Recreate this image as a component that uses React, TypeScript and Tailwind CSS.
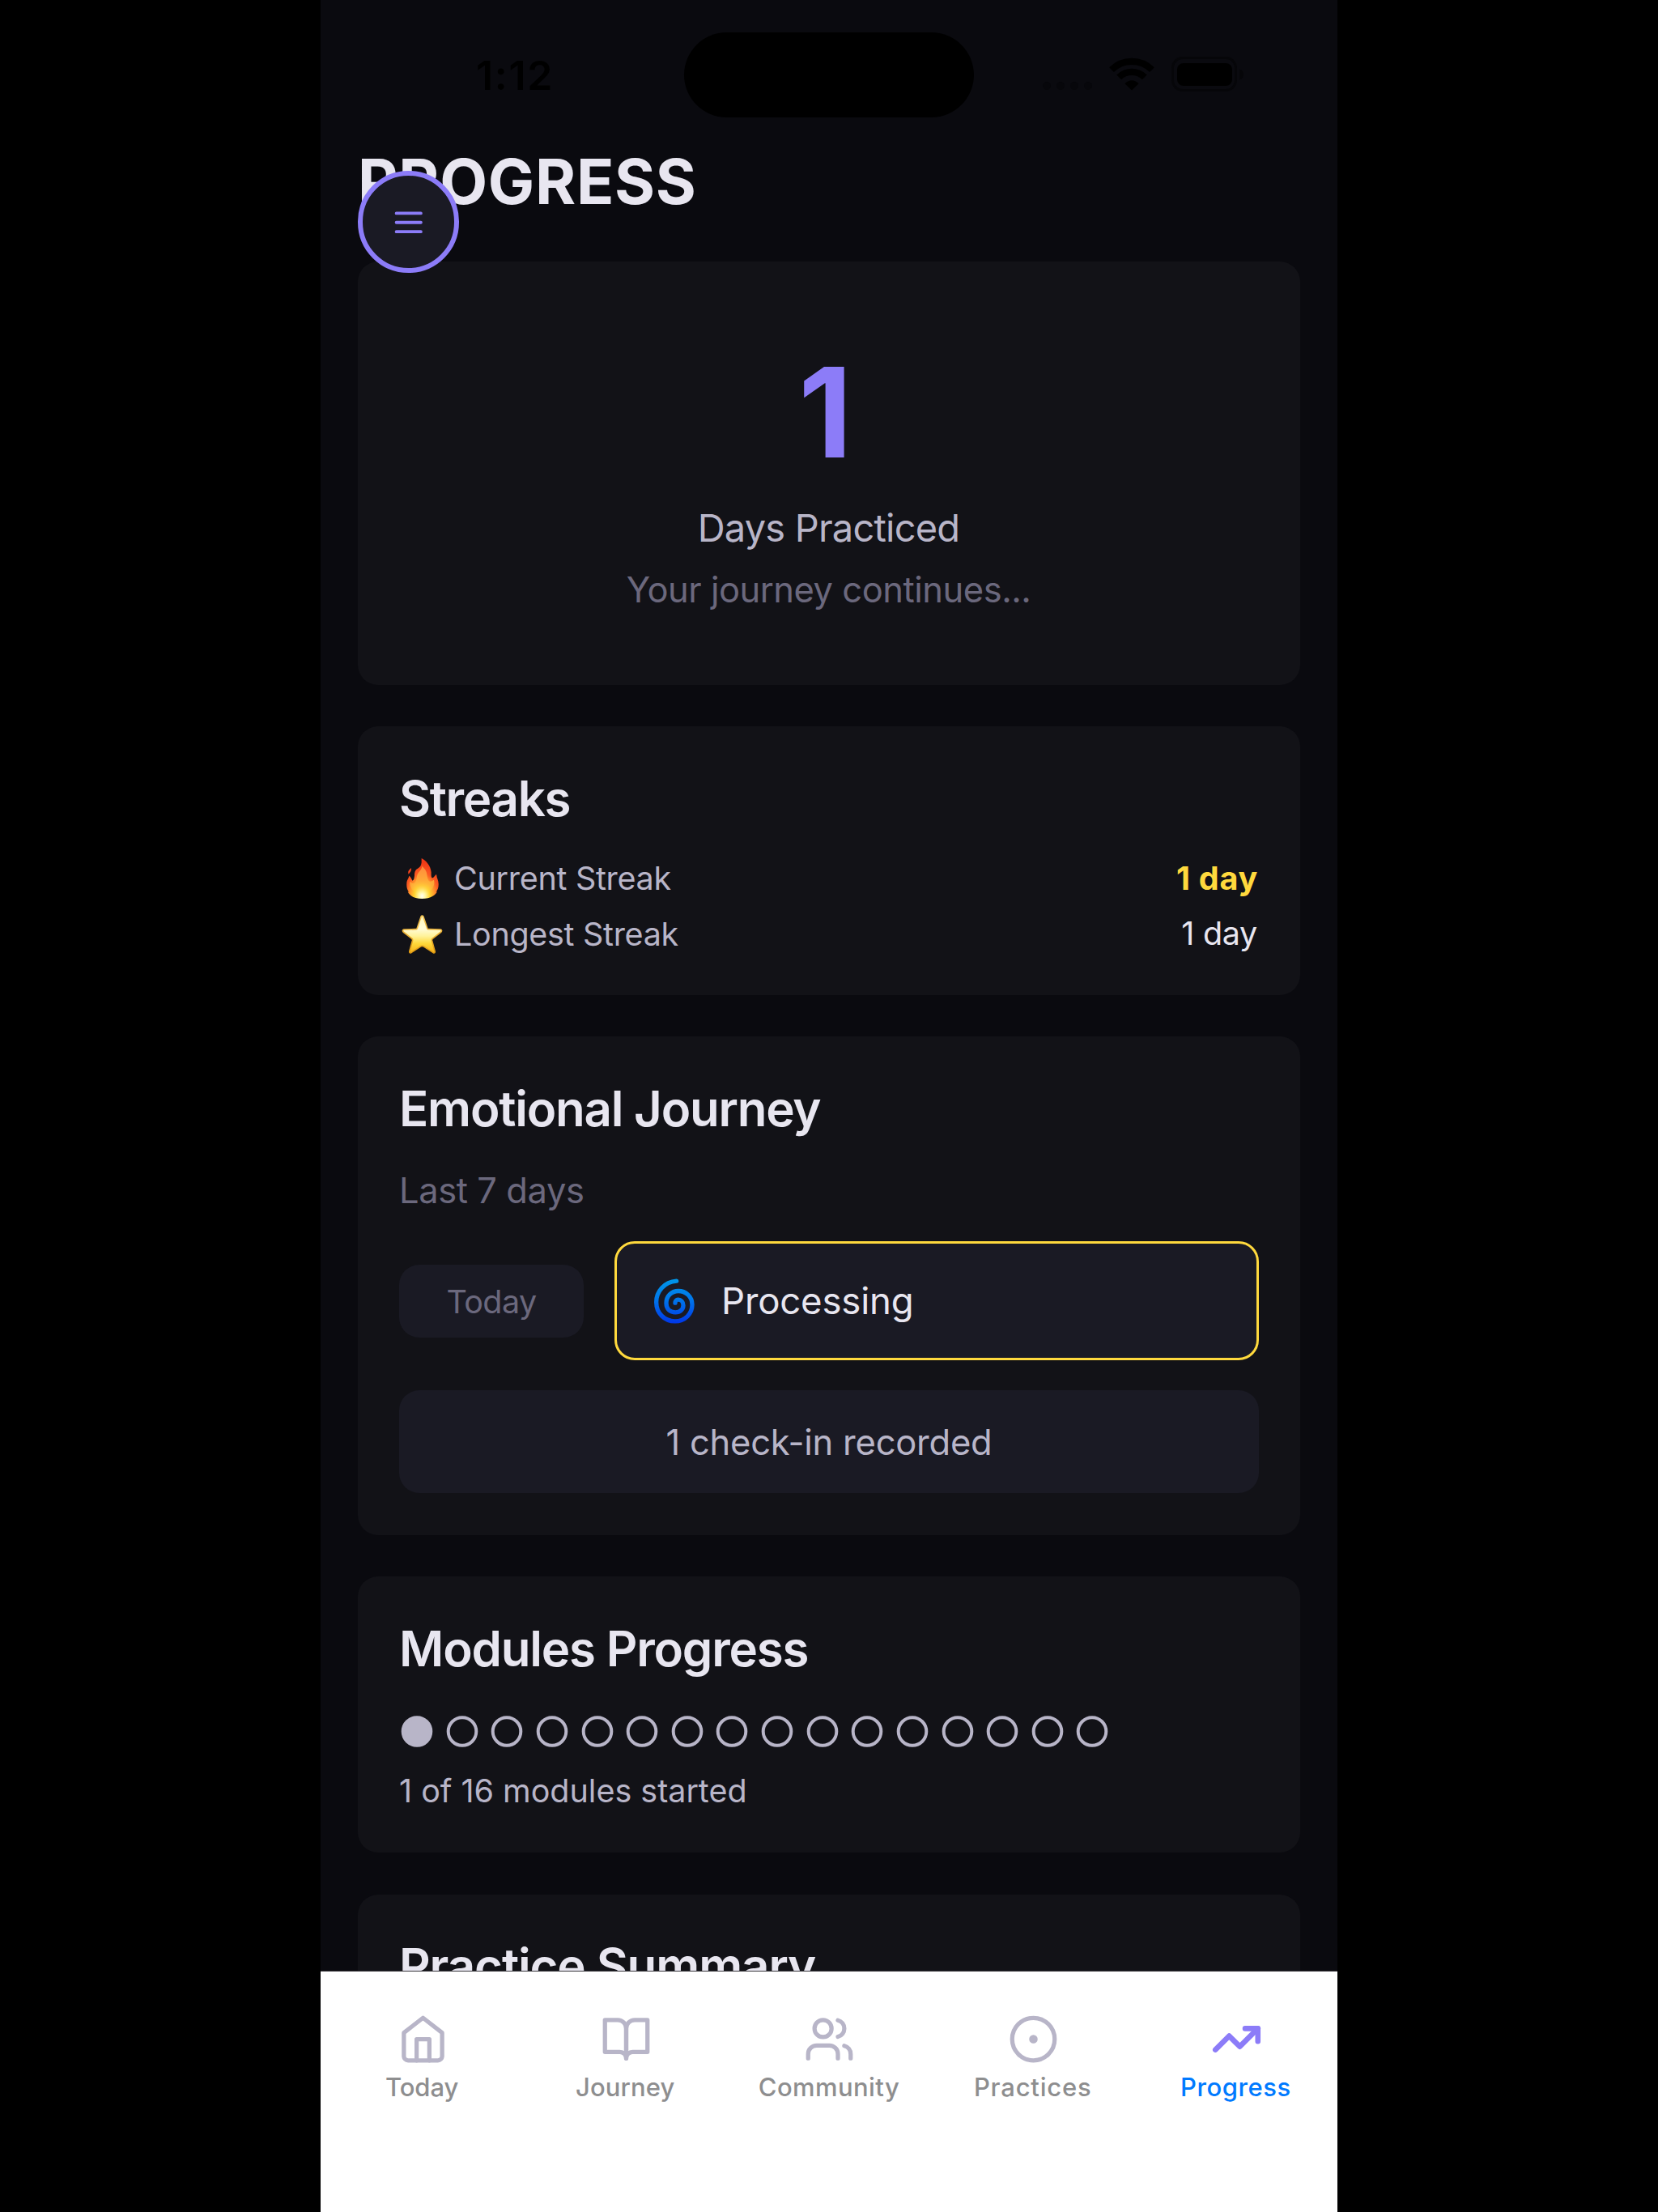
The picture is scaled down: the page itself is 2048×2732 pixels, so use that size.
import type { ReactNode } from 'react';

function StatusBar() {
  return (
    <div className="relative h-[185px] shrink-0 text-black">
      <div className="absolute left-[192px] top-[63px] text-[50px] leading-[60px] font-semibold tracking-[1.66px]">1:12</div>
      <div className="absolute left-[449px] top-[40px] h-[105px] w-[358px] rounded-full bg-black" />
      <div className="absolute left-[892px] top-[101px] flex gap-[7px]">
        {[0, 1, 2, 3].map((i) => (
          <span key={i} className="h-[10px] w-[10px] rounded-full bg-[#07070b]" />
        ))}
      </div>
      <svg className="absolute left-[974px] top-[71px]" width="56" height="41" viewBox="0 0 56 41" fill="none">
        <path d="M3 15.2A35.3 35.3 0 0 1 53 15.2" stroke="#000" strokeWidth="8.2" />
        <path d="M12.2 24.4A22.3 22.3 0 0 1 43.8 24.4" stroke="#000" strokeWidth="8.2" />
        <path d="M28 40.5L19.4 32.2Q28 24.2 36.6 32.2Z" fill="#000" />
      </svg>
      <svg className="absolute left-[1051px] top-[70px]" width="90" height="44" viewBox="0 0 90 44">
        <rect x="1.5" y="1.5" width="78" height="40" rx="12.5" fill="none" stroke="#060609" strokeWidth="3" />
        <rect x="7" y="8" width="68" height="28" rx="8" fill="#000" />
        <path d="M84 15.5q5 1.5 5 6.5t-5 6.5z" fill="#060609" />
      </svg>
    </div>
  );
}

function MenuButton() {
  return (
    <button className="absolute left-[46px] top-[211px] flex h-[126px] w-[125px] items-center justify-center rounded-full border-[6px] border-[#8c7cf8] bg-[#1a1a24] pt-[1px]">
      <svg className="shrink-0" width="45.5" height="45.5" viewBox="0 0 24 24" fill="none" stroke="#8c7cf8" strokeWidth="2" strokeLinecap="round">
        <path d="M4 6h16M4 12h16M4 18h16" />
      </svg>
    </button>
  );
}

function Card({ className, children }: { className: string; children: ReactNode }) {
  return <section className={`shrink-0 rounded-[25px] bg-[#121217] px-[51px] ${className}`}>{children}</section>;
}

function Heading({ className, children }: { className: string; children: ReactNode }) {
  return <h2 className={`text-[60px] leading-[72px] font-semibold whitespace-nowrap text-[#e8e6f0] ${className}`}>{children}</h2>;
}

function Fire() {
  return (
    <svg className="ml-2 h-[50px] w-[40px]" viewBox="66 30 120 150">
      <defs>
        <radialGradient id="fireBody" gradientUnits="userSpaceOnUse" cx="124" cy="170" r="125" gradientTransform="translate(124 0) scale(.72 1) translate(-124 0)">
          <stop offset="0" stopColor="#fffff0" />
          <stop offset=".14" stopColor="#fff7a0" />
          <stop offset=".32" stopColor="#ffd32e" />
          <stop offset=".5" stopColor="#ff9a2b" />
          <stop offset=".68" stopColor="#fb5a22" />
          <stop offset="1" stopColor="#f23a16" />
        </radialGradient>
        <linearGradient id="fireCore" x1="0" y1="0" x2="0" y2="1">
          <stop offset="0" stopColor="#ff8a3c" />
          <stop offset=".5" stopColor="#ffa838" />
          <stop offset="1" stopColor="#ffe04a" stopOpacity="0" />
        </linearGradient>
      </defs>
      <path
        fill="url(#fireBody)"
        d="M122 30C139 38 156 58 158 82C158 90 157 96 160 102C164 106 169 98 175 91C177 90 178 91 178 94C178 103 186 112 185 128C185 138 182 146 176 155L180 154C174 166 158 180 124 180C92 180 76 166 71 154L75 155C69 147 66 138 67 124C67 110 74 106 76 95C80 96 84 104 88 113C94 112 95 104 96 94C96 78 101 71 108 68C117 64 121 56 122 46Z"
      />
      <path fill="#f7431c" d="M84 66C85 72 83 80 78 84L74 89C72 84 72 79 75 75Q79 70 84 66Z" />
      <path
        fill="url(#fireCore)"
        d="M124 58C128 66 140 72 142 90C144 104 146 114 153 116C160 116 165 112 168 110C174 134 158 160 124 162C92 162 74 136 80 116C84 122 92 126 98 120C106 110 102 96 110 84C118 74 124 70 124 58Z"
      />
    </svg>
  );
}

function Star() {
  return (
    <svg className="h-[48px] w-[51px]" viewBox="47 236 152 144">
      <defs>
        <linearGradient id="starFill" x1="0" y1="0" x2="0" y2="1">
          <stop offset="0" stopColor="#fff6b8" />
          <stop offset=".35" stopColor="#fffbd8" />
          <stop offset=".55" stopColor="#fff29a" />
          <stop offset=".75" stopColor="#ffd83a" />
          <stop offset="1" stopColor="#f5b01a" />
        </linearGradient>
        <linearGradient id="starEdge" x1="0" y1="0" x2="0" y2="1">
          <stop offset="0" stopColor="#f0c050" />
          <stop offset="1" stopColor="#e09a12" />
        </linearGradient>
      </defs>
      <path
        fill="url(#starFill)"
        stroke="url(#starEdge)"
        strokeWidth="5"
        strokeLinejoin="round"
        d="M119 242Q123 236 127 242L142 286Q143 289 147 289L191 290Q198 293 193 299L161 324Q158 327 159 331L170 371Q171 378 164 376L127 352Q123 350 119 352L82 376Q75 378 76 371L87 331Q88 327 85 324L53 299Q48 293 55 290L99 289Q103 289 104 286Z"
      />
    </svg>
  );
}

function Cyclone() {
  return (
    <svg width="50" height="56" viewBox="83 56 150 167" fill="none">
      <defs>
        <linearGradient id="cyclone" gradientUnits="userSpaceOnUse" x1="0" y1="58" x2="0" y2="220">
          <stop offset="0" stopColor="#0096e8" />
          <stop offset=".45" stopColor="#0078ea" />
          <stop offset="1" stopColor="#0038e8" />
        </linearGradient>
      </defs>
      <path
        stroke="url(#cyclone)"
        strokeWidth="16"
        strokeLinecap="round"
        d="M166 65C120 68 91 105 91 143C91 185 122 214 160 214C198 214 224 186 224 153C224 122 200 102 173 102C146 102 128 122 128 147C128 170 143 181 162 181C180 181 191 169 191 155C191 142 182 134 172 134C165 134 161 140 161 146"
      />
    </svg>
  );
}

const tabs = [
  {
    label: 'Today',
    text: 'tracking-[-0.1px] -ml-[1px]',
    icon: (
      <>
        <path d="M3 9l9-7 9 7v11a2 2 0 0 1-2 2H5a2 2 0 0 1-2-2z" />
        <path d="M9 22V12h6v10" />
      </>
    ),
  },
  {
    label: 'Journey',
    text: 'tracking-[0.1px] -ml-[1px]',
    icon: (
      <>
        <path d="M2 3h6a4 4 0 0 1 4 4v14a3 3 0 0 0-3-3H2z" />
        <path d="M22 3h-6a4 4 0 0 0-4 4v14a3 3 0 0 1 3-3h7z" />
      </>
    ),
  },
  {
    label: 'Community',
    text: 'tracking-[0.4px]',
    icon: (
      <>
        <path d="M16 21v-2a4 4 0 0 0-4-4H6a4 4 0 0 0-4 4v2" />
        <circle cx="9" cy="7" r="4" />
        <path d="M22 21v-2a4 4 0 0 0-3-3.87" />
        <path d="M16 3.13a4 4 0 0 1 0 7.75" />
      </>
    ),
  },
  {
    label: 'Practices',
    text: 'tracking-[0.79px] ml-[1px]',
    icon: (
      <>
        <circle cx="12" cy="12" r="10" />
        <circle cx="12" cy="12" r="1" />
      </>
    ),
  },
  {
    label: 'Progress',
    text: 'tracking-[0.57px]',
    active: true,
    icon: (
      <>
        <path d="M22 7l-8.5 8.5-5-5L2 17" />
        <path d="M16 7h6v6" />
      </>
    ),
  },
];

function TabBar() {
  return (
    <nav className="grid h-[298px] shrink-0 grid-cols-5 border-t border-[#39383d] bg-white pt-[52px]">
      {tabs.map((t) => (
        <div key={t.label} className="flex flex-col items-center">
          <svg
            className={`ml-[2px] shrink-0 ${t.active ? 'stroke-[#8c7cf8]' : 'stroke-[#b8b5c8]'}`}
            width="63"
            height="63"
            viewBox="0 0 24 24"
            fill="none"
            strokeWidth={t.active ? 2.5 : 2}
            strokeLinecap="round"
            strokeLinejoin="round"
          >
            {t.icon}
          </svg>
          <span
            className={`mt-[8px] text-[31px] leading-[40px] font-medium ${t.text} ${t.active ? 'text-[#007aff]' : 'text-[#8e8e8f]'}`}
          >
            {t.label}
          </span>
        </div>
      ))}
    </nav>
  );
}

export default function App() {
  return (
    <div className="flex h-[2732px] w-[2048px] justify-center overflow-hidden bg-black font-['Inter',sans-serif]">
      <div className="relative flex w-[1256px] flex-col bg-[#0a0a0f]">
        <main className="flex h-[2434px] shrink-0 flex-col overflow-hidden px-[46px]">
          <div className="-mx-[46px] shrink-0">
            <StatusBar />
          </div>
          <h1 className="mb-[60px] shrink-0 text-[76.5px] leading-[78px] font-bold tracking-[0.7px] text-[#e8e6f0]">PROGRESS</h1>

          <div className="flex flex-col gap-[51px]">
            <Card className="flex h-[523px] flex-col items-center pt-[106px]">
              <div className="pr-[9px] text-[154px] leading-[160px] font-bold text-[#8c7cf8]">1</div>
              <div className="mt-[33px] pr-[1px] text-[47px] leading-[60px] tracking-[-0.8px] text-[#b8b5c8]">Days Practiced</div>
              <div className="mt-[19px] pr-[1px] text-[43.5px] leading-[54px] tracking-[-0.48px] text-[#6b687d]">Your journey continues...</div>
            </Card>

            <Card className="h-[332px] pt-[53px]">
              <Heading className="tracking-[-1.3px]">Streaks</Heading>
              <div className="mt-[38px] flex items-center text-[39.5px] leading-[50px]">
                <div className="w-[68px] pl-[1px]"><Fire /></div>
                <span className="tracking-[-0.3px] text-[#b8b5c8]">Current Streak</span>
                <span className="-mt-[1px] mr-[1px] ml-auto font-bold tracking-[0.75px] text-[#ffd93d]">1 day</span>
              </div>
              <div className="mt-[19px] flex items-center text-[39.5px] leading-[50px]">
                <div className="w-[68px] pl-[3px]"><Star /></div>
                <span className="tracking-[-0.31px] text-[#b8b5c8]">Longest Streak</span>
                <span className="-mt-[2px] mr-[2px] ml-auto tracking-[-0.3px] text-[#e8e6f0]">1 day</span>
              </div>
            </Card>

            <Card className="h-[616px] pt-[53px]">
              <Heading className="tracking-[-1.22px]">Emotional Journey</Heading>
              <div className="mt-[38px] text-[43.5px] leading-[54px] tracking-[-0.42px] text-[#6b687d]">Last 7 days</div>
              <div className="mt-[36px] flex items-center">
                <div className="h-[90px] w-[228px] rounded-[25px] bg-[#1a1a24] text-center text-[39.5px] leading-[92px] tracking-[-0.6px] text-[#6b687d]">
                  Today
                </div>
                <div className="ml-[38px] flex h-[147px] flex-1 items-center gap-[33px] rounded-[25px] border-[3px] border-[#ffd93d] bg-[#1a1a24] pl-[46px] text-[45.5px] text-[#e8e6f0]">
                  <Cyclone />
                  <span className="pt-[2px] tracking-[-0.15px]">Processing</span>
                </div>
              </div>
              <div className="mt-[37px] h-[127px] rounded-[25px] bg-[#1a1a24] text-center text-[43.5px] leading-[128px] tracking-[-0.23px] text-[#b8b5c8]">
                1 check-in recorded
              </div>
            </Card>

            <Card className="h-[341px] pt-[53px]">
              <Heading className="tracking-[-1.2px]">Modules Progress</Heading>
              <div className="mt-[47px] flex">
                {Array.from({ length: 16 }, (_, i) => (
                  <svg key={i} width="55.63" height="39" viewBox="0 0 55.63 39" className="shrink-0">
                    <circle cx="22" cy="19.5" r="17.3" fill={i === 0 ? '#b8b5c8' : 'none'} stroke="#b8b5c8" strokeWidth="4" />
                  </svg>
                ))}
              </div>
              <div className="mt-[29px] text-[39.5px] leading-[50px] tracking-[-0.02px] text-[#b8b5c8]">1 of 16 modules started</div>
            </Card>

            <Card className="mt-[1px] h-[400px] pt-[52px]">
              <Heading className="tracking-[-1.12px]">Practice Summary</Heading>
            </Card>
          </div>
        </main>
        <TabBar />
        <MenuButton />
      </div>
    </div>
  );
}
